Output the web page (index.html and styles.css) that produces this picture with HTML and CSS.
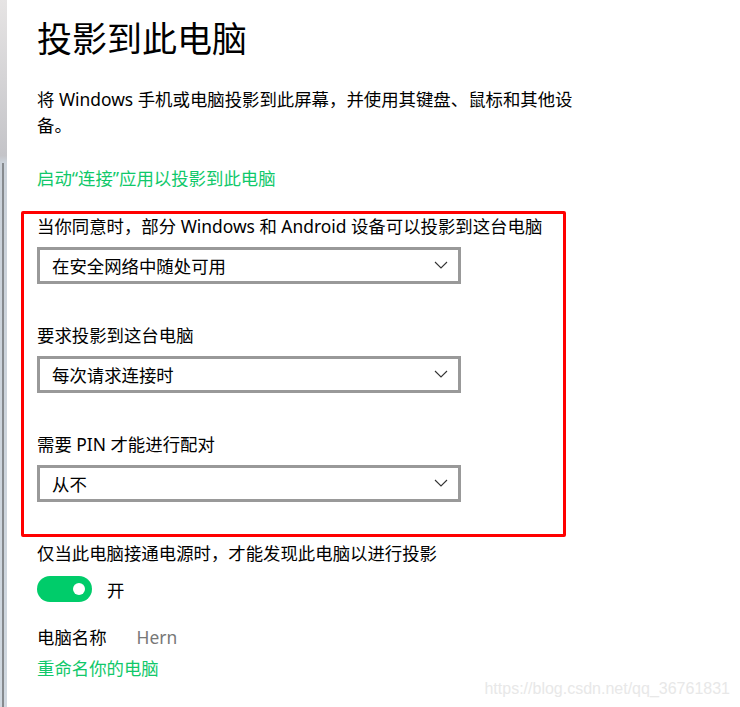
FILE: index.html
```html
<!DOCTYPE html>
<html lang="zh-CN">
<head>
  <meta charset="UTF-8" />
  <meta name="viewport" content="width=device-width, initial-scale=1.0"/>
  <title>投影到此电脑</title>
  <link rel="stylesheet" href="styles.css">
</head>
<body>

  <div class="side-edge"></div>

  <main class="page">
    <h1>投影到此电脑</h1>
    <p class="intro">将 Windows 手机或电脑投影到此屏幕，并使用其键盘、鼠标和其他设备。</p>
    <a class="link launch" href="#">启动“连接”应用以投影到此电脑</a>

    <section class="highlight">
      <div class="field">
        <label>当你同意时，部分 Windows 和 Android 设备可以投影到这台电脑</label>
        <div class="select">
          <span>在安全网络中随处可用</span>
          <svg class="chevron" width="14" height="8" viewBox="0 0 14 8"><path d="M1 1l6 6 6-6" fill="none" stroke="#333" stroke-width="1.1"/></svg>
        </div>
      </div>
      <div class="field">
        <label>要求投影到这台电脑</label>
        <div class="select">
          <span>每次请求连接时</span>
          <svg class="chevron" width="14" height="8" viewBox="0 0 14 8"><path d="M1 1l6 6 6-6" fill="none" stroke="#333" stroke-width="1.1"/></svg>
        </div>
      </div>
      <div class="field">
        <label>需要 PIN 才能进行配对</label>
        <div class="select">
          <span>从不</span>
          <svg class="chevron" width="14" height="8" viewBox="0 0 14 8"><path d="M1 1l6 6 6-6" fill="none" stroke="#333" stroke-width="1.1"/></svg>
        </div>
      </div>
    </section>

    <p class="power">仅当此电脑接通电源时，才能发现此电脑以进行投影</p>
    <div class="toggle-row">
      <span class="toggle"><span class="knob"></span></span>
      <span>开</span>
    </div>

    <div class="name-row">
      <span>电脑名称</span>
      <span class="pc-name">Hern</span>
    </div>
    <a class="link" href="#">重命名你的电脑</a>
  </main>

  <div class="watermark">https://blog.csdn.net/qq_36761831</div>

</body>
</html>
```

FILE: styles.css
```css
* {
  box-sizing: border-box;
  margin: 0;
  padding: 0;
}

body {
  font-family: 'Noto Sans', 'Noto Sans CJK SC', sans-serif;
  background: #ffffff;
  color: #000000;
  display: flex;
  min-height: 707px;
  overflow: hidden;
  position: relative;
}

.side-edge {
  width: 7px;
  flex-shrink: 0;
  background: linear-gradient(180deg, #e6e4e4 0%, #c4c4c8 22%, #cbd2da 23%, #d0d8e0 100%);
  position: relative;
}

.side-edge::after {
  content: '';
  position: absolute;
  left: 2px;
  top: 163px;
  bottom: 0;
  width: 2px;
  background: #868a8e;
}

.page {
  padding: 15px 0 0 14px;
  width: 600px;
}

h1 {
  font-weight: 400;
  font-size: 35px;
  line-height: 48px;
  margin-left: 16px;
}

.intro {
  font-size: 17.4px;
  line-height: 26px;
  margin: 23px 0 0 16px;
  max-width: 560px;
}

.link {
  display: block;
  color: #10c86a;
  text-decoration: none;
  font-size: 17.4px;
  line-height: 26px;
  margin-left: 16px;
}

.launch {
  margin-top: 27px;
}

.highlight {
  margin-top: 20px;
  width: 545px;
  border: 3px solid #ff0000;
  border-radius: 2px;
  padding: 0 0 32px 13px;
}

.field + .field {
  margin-top: 39px;
}

.field label {
  display: block;
  font-size: 17.4px;
  line-height: 24px;
}

.select {
  margin-top: 9px;
  width: 424px;
  height: 37px;
  border: 3px solid #999999;
  display: flex;
  align-items: center;
  justify-content: space-between;
  padding: 0 10px 0 12px;
  font-size: 17.4px;
}

.chevron {
  margin-top: -2px;
}

.power {
  font-size: 17.4px;
  line-height: 26px;
  margin: 3px 0 0 16px;
}

.toggle-row {
  display: flex;
  align-items: center;
  gap: 15px;
  margin: 10px 0 0 16px;
  font-size: 17.4px;
}

.toggle {
  width: 55px;
  height: 26px;
  border-radius: 13px;
  background: #00cc6a;
  display: flex;
  align-items: center;
  justify-content: flex-end;
  padding-right: 7px;
}

.knob {
  width: 12px;
  height: 12px;
  border-radius: 50%;
  background: #ffffff;
}

.name-row {
  display: flex;
  gap: 30px;
  margin: 22px 0 0 16px;
  font-size: 17.4px;
  line-height: 26px;
}

.pc-name {
  color: #777777;
}

.name-row + .link {
  margin-top: 5px;
}

.watermark {
  position: absolute;
  right: 10px;
  bottom: 9px;
  font-family: 'Liberation Sans', Arial, sans-serif;
  font-size: 16px;
  color: #e8e8e8;
}
```
